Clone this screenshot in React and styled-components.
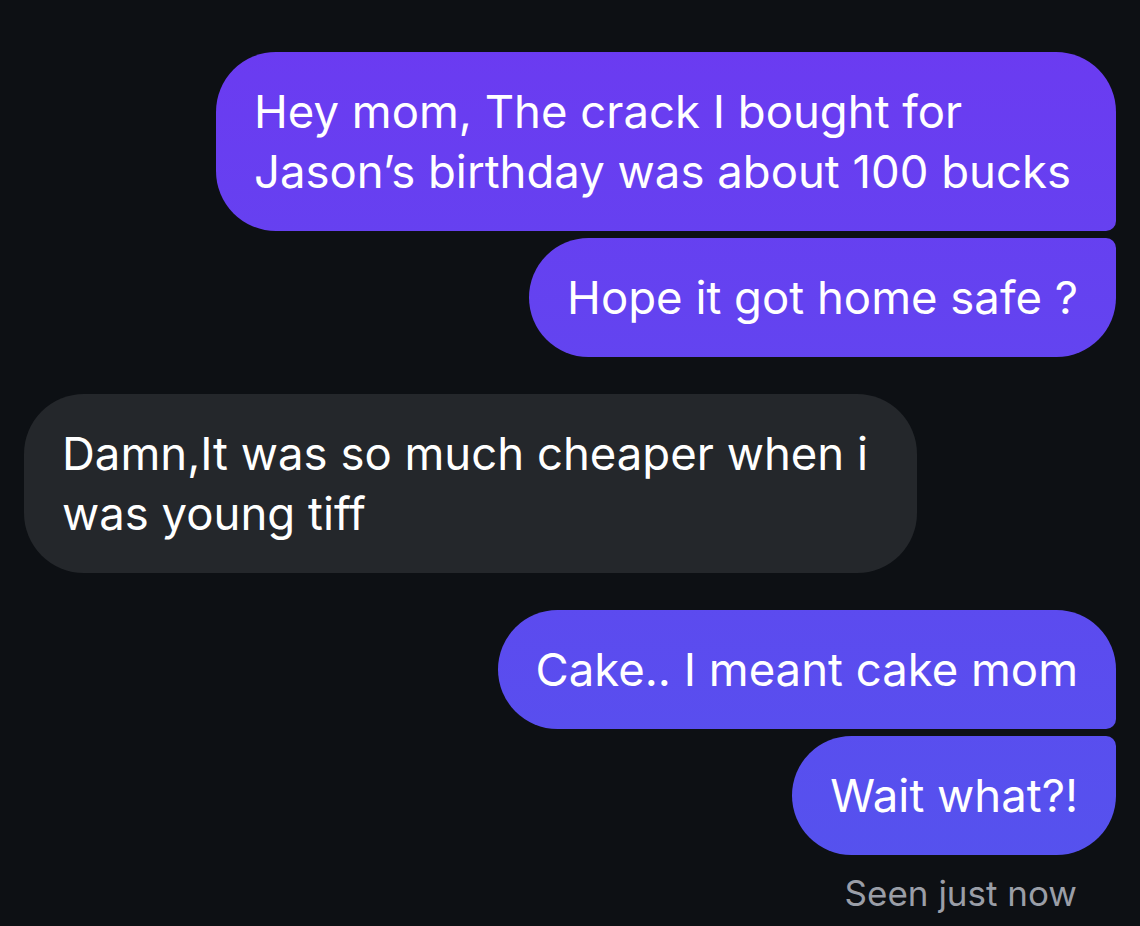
import React from 'react'
import styled, { createGlobalStyle } from 'styled-components'

const GlobalStyle = createGlobalStyle`
    html, body {
        margin: 0;
        padding: 0;
        background: #0d1014;
    }
    body {
        font-family: Inter, "Noto Sans", "Liberation Sans", sans-serif;
        -webkit-font-smoothing: antialiased;
    }
`

const Thread = styled.div`
    width: 1140px;
    height: 926px;
    box-sizing: border-box;
    padding: 52px 24px 0;
    display: flex;
    flex-direction: column;
    background: #0d1014;
    overflow: hidden;
`
const Group = styled.div`
    display: flex;
    flex-direction: column;
    align-items: ${p => (p.$mine ? 'flex-end' : 'flex-start')};
    gap: 7px;
    & + & {
        margin-top: 37px;
    }
`
const Bubble = styled.div`
    box-sizing: border-box;
    width: ${p => (p.$width ? `${p.$width}px` : 'auto')};
    padding: 29.5px 38px;
    font-size: 45.5px;
    line-height: 60px;
    letter-spacing: 0;
    white-space: nowrap;
    color: #ffffff;
    border-radius: ${p => p.$corners || '60px'};
    background: ${p => (p.$mine
        ? 'linear-gradient(180deg, #6b3bf1 40px, #5552ee 870px) fixed'
        : '#24272b')};
`
const Seen = styled.div`
    align-self: flex-end;
    margin-top: 11px;
    margin-right: 39px;
    font-size: 35px;
    line-height: 40px;
    color: #9a9ea7;
`

const big = '60px'
const small = '10px'
const lastTop = `${big} ${big} ${small} ${big}`
const nextBelow = `${big} ${small} ${big} ${big}`

const App = () => {
    return (
        <>
            <GlobalStyle />
            <Thread>
                <Group $mine>
                    <Bubble $mine $width={900} $corners={lastTop}>
                        Hey mom, The crack I bought for<br />
                        Jason’s birthday was about 100 bucks
                    </Bubble>
                    <Bubble $mine $corners={nextBelow}>Hope it got home safe ?</Bubble>
                </Group>
                <Group>
                    <Bubble $width={893}>
                        Damn,It was so much cheaper when i<br />
                        was young tiff
                    </Bubble>
                </Group>
                <Group $mine>
                    <Bubble $mine $corners={lastTop}>Cake.. I meant cake mom</Bubble>
                    <Bubble $mine $corners={nextBelow}>Wait what?!</Bubble>
                    <Seen>Seen just now</Seen>
                </Group>
            </Thread>
        </>
    )
}

export default App
